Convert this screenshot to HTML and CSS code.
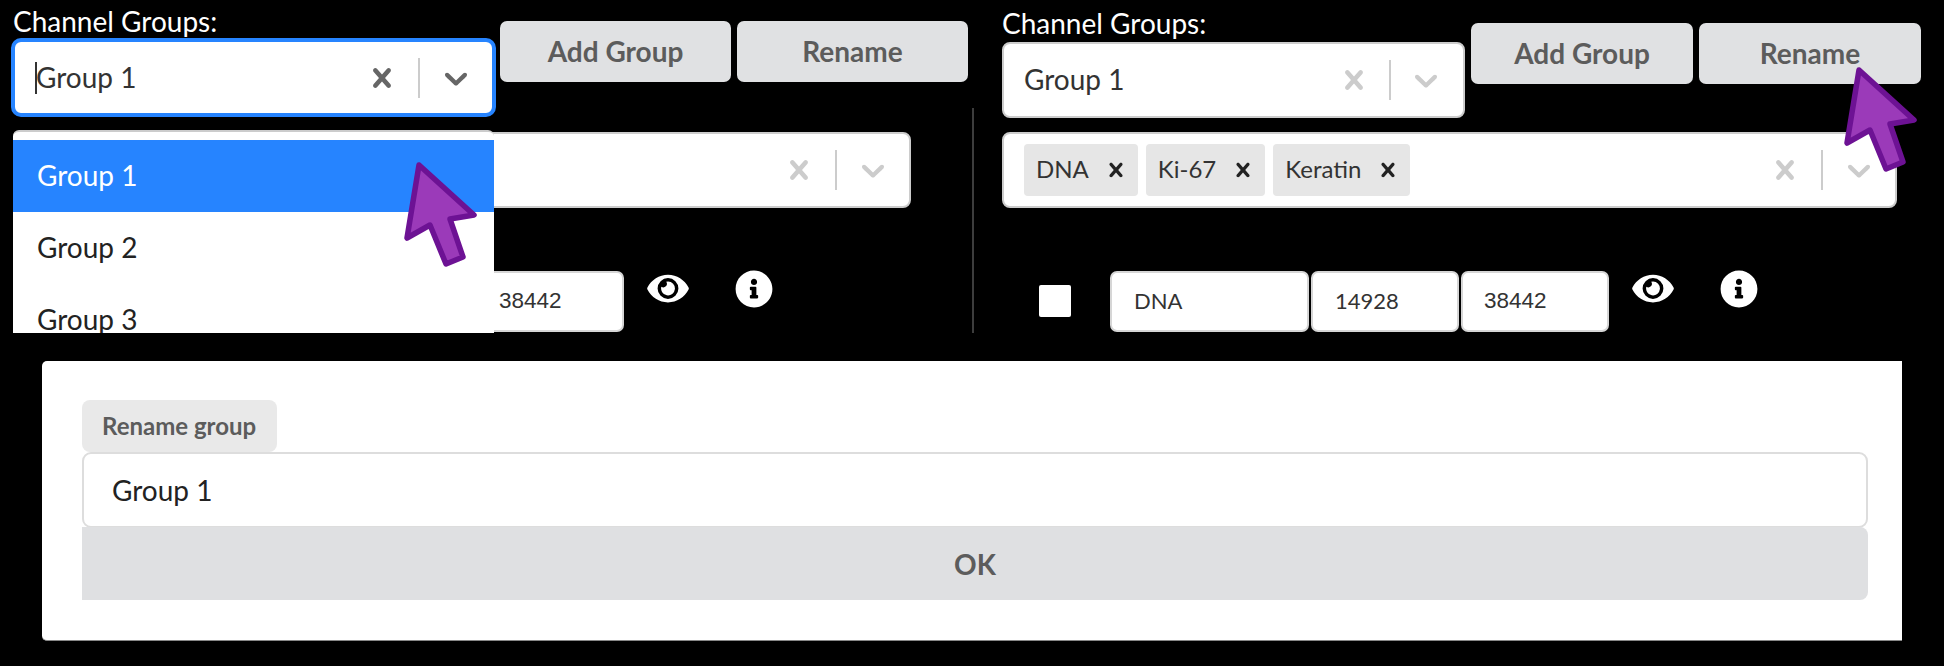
FILE: index.html
```html
<!DOCTYPE html>
<html lang="en">
<head>
    <meta charset="UTF-8">
    <meta name="viewport" content="width=device-width, initial-scale=1.0">
    <title>Channel Groups</title>
    <link rel="stylesheet" href="styles.css">
</head>
<body>

<svg class="icon-defs" width="0" height="0">
    <symbol id="icon-clear" viewBox="0 0 20 20"><path d="M14.348 14.849c-0.469 0.469-1.229 0.469-1.697 0l-2.651-3.030-2.651 3.029c-0.469 0.469-1.229 0.469-1.697 0-0.469-0.469-0.469-1.229 0-1.697l2.758-3.15-2.759-3.152c-0.469-0.469-0.469-1.228 0-1.697s1.228-0.469 1.697 0l2.652 3.031 2.651-3.031c0.469-0.469 1.228-0.469 1.697 0s0.469 1.229 0 1.697l-2.758 3.152 2.758 3.15c0.469 0.469 0.469 1.229 0 1.698z"/></symbol>
    <symbol id="icon-chevron" viewBox="0 0 20 20"><path d="M4.516 7.548c0.436-0.446 1.043-0.481 1.576 0l3.908 3.747 3.908-3.747c0.533-0.481 1.141-0.446 1.576 0 0.436 0.445 0.408 1.197 0 1.615-0.406 0.418-4.695 4.502-4.695 4.502-0.217 0.223-0.502 0.335-0.789 0.335s-0.572-0.112-0.79-0.335c0 0-4.287-4.084-4.695-4.502s-0.436-1.17 0-1.615z"/></symbol>
    <symbol id="icon-eye" viewBox="0 0 576 512"><path d="M572.52 241.4C518.29 135.59 410.93 64 288 64S57.68 135.64 3.48 241.41a32.35 32.35 0 0 0 0 29.19C57.71 376.41 165.07 448 288 448s230.32-71.64 284.52-177.41a32.35 32.35 0 0 0 0-29.19zM288 400a144 144 0 1 1 144-144 143.93 143.93 0 0 1-144 144zm0-240a95.31 95.31 0 0 0-25.31 3.79 47.85 47.85 0 0 1-66.9 66.9A95.78 95.78 0 1 0 288 160z"/></symbol>
    <symbol id="icon-info" viewBox="0 0 512 512"><path d="M256 8C119.043 8 8 119.083 8 256c0 136.997 111.043 248 248 248s248-111.003 248-248C504 119.083 392.957 8 256 8zm0 110c23.196 0 42 18.804 42 42s-18.804 42-42 42-42-18.804-42-42 18.804-42 42-42zm56 254c0 6.627-5.373 12-12 12h-88c-6.627 0-12-5.373-12-12v-24c0-6.627 5.373-12 12-12h12v-64h-12c-6.627 0-12-5.373-12-12v-24c0-6.627 5.373-12 12-12h64c6.627 0 12 5.373 12 12v100h12c6.627 0 12 5.373 12 12v24z"/></symbol>
    <symbol id="icon-cursor" viewBox="0 0 78 112"><path d="M17 6 L72 56 L48 60 L61 98 L44 105 L28 66 L5 79 Z"/></symbol>
</svg>

<div class="top">
    <!-- left panel: dropdown open -->
    <section class="panel panel-left">
        <div class="head">
            <div class="group-col">
                <div class="group-label">Channel Groups:</div>
                <div class="select select-focus">
                    <div class="select-value"><span class="caret"></span>Group 1</div>
                    <svg class="ind ind-clear"><use href="#icon-clear"/></svg>
                    <span class="ind-sep"></span>
                    <svg class="ind ind-chevron"><use href="#icon-chevron"/></svg>
                </div>
            </div>
            <div class="head-buttons">
                <button class="btn">Add Group</button>
                <button class="btn">Rename</button>
            </div>
        </div>

        <div class="select select-multi">
            <div class="select-value"></div>
            <svg class="ind ind-clear"><use href="#icon-clear"/></svg>
            <span class="ind-sep"></span>
            <svg class="ind ind-chevron"><use href="#icon-chevron"/></svg>
        </div>

        <div class="channel-row">
            <input class="field field-num field-arial" value="38442">
            <svg class="row-eye"><use href="#icon-eye"/></svg>
            <svg class="row-info"><use href="#icon-info"/></svg>
        </div>

        <div class="menu">
            <div class="menu-item active">Group 1</div>
            <div class="menu-item">Group 2</div>
            <div class="menu-item">Group 3</div>
        </div>

        <svg class="cursor"><use href="#icon-cursor"/></svg>
    </section>

    <div class="divider"></div>

    <!-- right panel -->
    <section class="panel panel-right">
        <div class="head">
            <div class="group-col">
                <div class="group-label">Channel Groups:</div>
                <div class="select">
                    <div class="select-value">Group 1</div>
                    <svg class="ind ind-clear muted"><use href="#icon-clear"/></svg>
                    <span class="ind-sep"></span>
                    <svg class="ind ind-chevron muted"><use href="#icon-chevron"/></svg>
                </div>
            </div>
            <div class="head-buttons">
                <button class="btn">Add Group</button>
                <button class="btn">Rename</button>
            </div>
        </div>

        <div class="select select-multi">
            <div class="chips">
                <span class="chip">DNA<svg class="chip-x"><use href="#icon-clear"/></svg></span>
                <span class="chip">Ki-67<svg class="chip-x"><use href="#icon-clear"/></svg></span>
                <span class="chip">Keratin<svg class="chip-x"><use href="#icon-clear"/></svg></span>
            </div>
            <svg class="ind ind-clear muted"><use href="#icon-clear"/></svg>
            <span class="ind-sep"></span>
            <svg class="ind ind-chevron muted"><use href="#icon-chevron"/></svg>
        </div>

        <div class="channel-row">
            <span class="checkbox"></span>
            <input class="field field-name" value="DNA">
            <input class="field field-num" value="14928">
            <input class="field field-num field-arial" value="38442">
            <svg class="row-eye"><use href="#icon-eye"/></svg>
            <svg class="row-info"><use href="#icon-info"/></svg>
        </div>

        <svg class="cursor"><use href="#icon-cursor"/></svg>
    </section>
</div>

<div class="modal">
    <label class="modal-label" for="groupName">Rename group</label>
    <input class="modal-input" id="groupName" value="Group 1">
    <button class="modal-ok">OK</button>
</div>

</body>
</html>
```

FILE: styles.css
```css
body {
    margin: 0;
    background-color: #000;
    color: #333;
    font-family: Lato, "Noto Sans", sans-serif;
    overflow: hidden;
}

.icon-defs {
    position: absolute;
}

.top {
    display: flex;
    height: 333px;
}

.panel {
    position: relative;
    box-sizing: border-box;
}

.panel-left {
    width: 972px;
    padding: 8px 0 0 11px;
}

.panel-right {
    flex: 1;
    padding: 10px 0 0 28px;
}

.divider {
    width: 2px;
    height: 225px;
    margin-top: 108px;
    background-color: #3d3d3d;
}

.head {
    display: flex;
    align-items: flex-start;
}

.group-label {
    color: #fff;
    font-size: 28px;
    line-height: 26px;
    padding: 0 0 4px 2px;
}

.panel-right .group-label {
    padding: 0 0 6px;
}

/* select */
.select {
    display: flex;
    align-items: center;
    box-sizing: border-box;
    height: 76px;
    background-color: #fff;
    border: 2px solid #ccc;
    border-radius: 8px;
}

.panel-right .group-col {
    width: 463px;
}

.panel-left .group-col {
    width: 485px;
}

.select-focus {
    height: 79px;
    border: 4px solid #2684ff;
    border-radius: 10px;
}

.select-value {
    flex: 1;
    display: flex;
    align-items: center;
    box-sizing: border-box;
    font-size: 28px;
    padding: 0 0 2px 20px;
}

.caret {
    width: 2px;
    height: 32px;
    margin: 2px -1px 0 0;
    background-color: #333;
}

.ind {
    flex: none;
    width: 38px;
    height: 38px;
    fill: #666;
}

.ind.muted,
.select-multi .ind {
    fill: #ccc;
}

.ind-sep {
    flex: none;
    width: 2px;
    height: 40px;
    margin: 0 17px;
    background-color: #ccc;
}

.ind-chevron {
    margin-right: 17px;
}

.panel-right .head .ind-chevron {
    margin-right: 18px;
}

.panel-right .head .ind-sep {
    margin: 0 16px;
}

.select-multi {
    width: 898px;
    margin: 15px 0 0 2px;
}

.panel-right .select-multi {
    width: 895px;
    margin: 14px 0 0 0;
}

.chips {
    flex: 1;
    display: flex;
    gap: 8px;
    padding-left: 20px;
}

.chip {
    display: flex;
    align-items: center;
    box-sizing: border-box;
    height: 52px;
    padding: 0 8px 4px 12px;
    font-size: 24px;
    background-color: #e6e6e6;
    border-radius: 4px;
}

.chip-x {
    width: 28px;
    height: 28px;
    margin: 3px 0 0 13px;
    fill: #222;
}

/* buttons */
.head-buttons {
    display: flex;
    gap: 6px;
}

.panel-left .head-buttons {
    margin: 13px 0 0 4px;
}

.panel-right .head-buttons {
    margin: 13px 0 0 6px;
}

.btn {
    height: 61px;
    padding: 0 0 2px;
    border: none;
    border-radius: 7px;
    background-color: #e0e1e3;
    color: #5c5c5c;
    font-family: inherit;
    font-size: 28px;
    font-weight: 700;
}

.panel-left .btn {
    width: 231px;
}

.panel-right .btn {
    width: 222px;
}

/* channel row */
.channel-row {
    display: flex;
    align-items: flex-start;
    margin-top: 63px;
}

.panel-left .channel-row {
    padding-left: 465px;
}

.checkbox {
    width: 32px;
    height: 32px;
    margin: 14px 39px 0 37px;
    background-color: #fff;
    border-radius: 2px;
}

.field {
    box-sizing: border-box;
    height: 61px;
    margin: 0 2px 0 0;
    padding: 0 0 2px 22px;
    border: 2px solid #d6d6d6;
    border-radius: 7px;
    background-color: #fff;
    color: #333;
    font-family: inherit;
    font-size: 22px;
}

.field-name {
    width: 199px;
}

.field-num {
    width: 148px;
}

.field-arial {
    margin-right: 0;
    padding-left: 21px;
    font-family: "Liberation Sans", Arial, sans-serif;
    font-size: 22.5px;
}

.row-eye {
    width: 42px;
    height: 37px;
    margin: -1px 0 0 23px;
    fill: #fff;
}

.row-info {
    width: 38px;
    height: 38px;
    margin: -1px 0 0 46px;
    fill: #fff;
}

/* open dropdown */
.menu {
    position: absolute;
    left: 13px;
    top: 130px;
    box-sizing: border-box;
    width: 481px;
    height: 203px;
    padding-top: 8px;
    overflow: hidden;
    background-color: #fff;
    border-top: 2px solid #ccc;
    border-radius: 6px 6px 0 0;
    font-size: 28px;
    color: #222;
}

.menu-item {
    height: 72px;
    line-height: 70px;
    padding-left: 24px;
}

.menu-item.active {
    background-color: #2684ff;
    color: #fff;
}

.cursor {
    position: absolute;
    width: 78px;
    height: 112px;
    fill: #9b3ab9;
    stroke: #6d1294;
    stroke-width: 5.5px;
    stroke-linejoin: round;
}

.panel-left .cursor {
    left: 402px;
    top: 159px;
}

.panel-right .cursor {
    left: 868px;
    top: 64px;
}

/* rename modal */
.modal {
    display: flex;
    flex-direction: column;
    align-items: flex-start;
    box-sizing: border-box;
    width: 1860px;
    height: 280px;
    margin: 28px 0 0 42px;
    padding: 39px 34px 0 40px;
    background-color: #fff;
    border-bottom: 1px solid #888;
    border-radius: 5px 0 0 5px;
}

.modal-label {
    box-sizing: border-box;
    height: 52px;
    padding: 0 21px 0 20px;
    line-height: 52px;
    background-color: #e9e9e9;
    border-radius: 8px;
    color: #5c5c5c;
    font-size: 24px;
    font-weight: 700;
}

.modal-input {
    box-sizing: border-box;
    width: 1786px;
    height: 76px;
    padding: 0 0 0 28px;
    border: 2px solid #ddd;
    border-radius: 9px;
    color: #222;
    font-family: inherit;
    font-size: 28px;
}

.modal-ok {
    width: 1786px;
    height: 73px;
    margin-top: -1px;
    border: none;
    border-radius: 0 8px 8px 0;
    background-color: #dfe0e2;
    color: #5c5c5c;
    font-family: inherit;
    font-size: 28px;
    font-weight: 700;
}
```
